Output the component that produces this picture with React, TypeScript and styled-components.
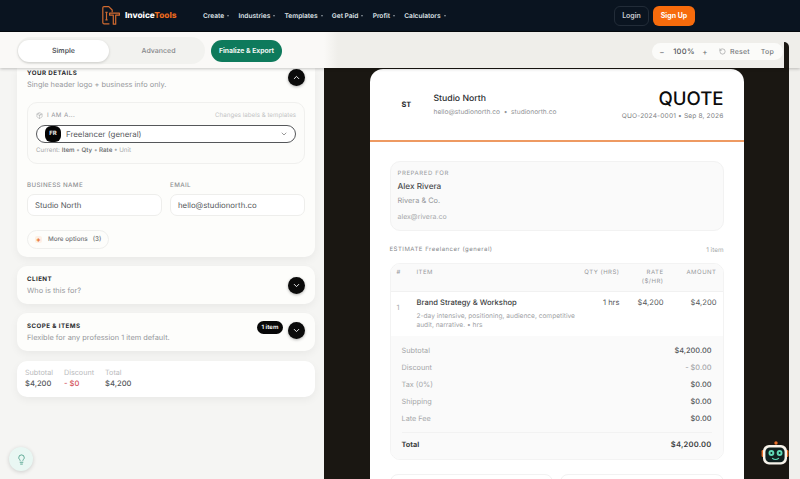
import styled, { createGlobalStyle } from 'styled-components'
import { ChevronDown, ChevronUp, Lightbulb, Package, RotateCcw } from 'lucide-react'

const navItems = ['Create', 'Industries', 'Templates', 'Get Paid', 'Profit', 'Calculators']
const summary = [
  { label: 'Subtotal', value: '$4,200.00', tone: '#55585c' },
  { label: 'Discount', value: '- $0.00', tone: '#a5a7aa' },
  { label: 'Tax (0%)', value: '$0.00', tone: '#55585c' },
  { label: 'Shipping', value: '$0.00', tone: '#55585c' },
  { label: 'Late Fee', value: '$0.00', tone: '#55585c' },
]

const App = () => {
  return (
    <Page>
      <GlobalStyle />
      <Header>
        <LogoMark viewBox="0 0 18 19" fill="none" stroke="#cf6a30" strokeWidth="1.2" strokeLinejoin="round">
          <path d="M7.4 17.8H2a1.2 1.2 0 0 1-1.2-1.2V1.8A1.2 1.2 0 0 1 2 .6h4.8l3.4 3.4v2.2" />
          <path d="M3.4 6.4h2.2M4.5 6.4v7.4M3.4 13.8h2.2" />
          <path d="M7.6 7.2h9.8v2h-3.7v9h-2.4v-9H7.6z" />
        </LogoMark>
        <Brand>
          Invoice<span>Tools</span>
        </Brand>
        <Nav>
          {navItems.map((item) => (
            <NavItem key={item}>
              {item}
              <Caret />
            </NavItem>
          ))}
        </Nav>
        <Login>Login</Login>
        <SignUp>Sign Up</SignUp>
      </Header>

      <Toolbar>
        <ToolbarLeft>
          <Toggle>
            <ToggleOption active>Simple</ToggleOption>
            <ToggleOption>Advanced</ToggleOption>
          </Toggle>
          <Finalize>Finalize &amp; Export</Finalize>
        </ToolbarLeft>
        <ToolbarRight>
          <ZoomPill>
            <ZoomSign>−</ZoomSign>
            <ZoomValue>100%</ZoomValue>
            <ZoomSign>+</ZoomSign>
            <ZoomAction>
              <RotateCcw size={7} strokeWidth={1.6} />
              Reset
            </ZoomAction>
            <ZoomAction>Top</ZoomAction>
          </ZoomPill>
          <PreviewCorner />
        </ToolbarRight>
      </Toolbar>

      <Workspace>
        <Sidebar>
          <DetailsCard>
            <CardHead>
              <div>
                <CardTitle>YOUR DETAILS</CardTitle>
                <CardSub>Single header logo + business info only.</CardSub>
              </div>
              <RoundButton>
                <ChevronUp size={9} strokeWidth={2.6} />
              </RoundButton>
            </CardHead>

            <RoleBox>
              <RoleTop>
                <RoleLabel>
                  <Package size={7} strokeWidth={1.5} />I AM A...
                </RoleLabel>
                <RoleHint>Changes labels &amp; templates</RoleHint>
              </RoleTop>
              <RoleSelect>
                <RoleBadge>FR</RoleBadge>
                <RoleName>Freelancer (general)</RoleName>
                <ChevronDown size={8} color="#666" />
              </RoleSelect>
              <RoleCurrent>
                Current: <b>Item</b> • <b>Qty</b> • <b>Rate</b> • Unit
              </RoleCurrent>
            </RoleBox>

            <FieldGrid>
              <Field>
                <FieldLabel>BUSINESS NAME</FieldLabel>
                <FieldInput>Studio North</FieldInput>
              </Field>
              <Field>
                <FieldLabel>EMAIL</FieldLabel>
                <FieldInput>hello@studionorth.co</FieldInput>
              </Field>
            </FieldGrid>

            <MoreOptions>
              <MoreDot>+</MoreDot>
              More options <MoreCount>(3)</MoreCount>
            </MoreOptions>
          </DetailsCard>

          <CollapsedCard>
            <div>
              <CardTitle>CLIENT</CardTitle>
              <CardSub>Who is this for?</CardSub>
            </div>
            <RoundButton>
              <ChevronDown size={9} strokeWidth={2.6} />
            </RoundButton>
          </CollapsedCard>

          <CollapsedCard>
            <div>
              <CardTitle>SCOPE &amp; ITEMS</CardTitle>
              <CardSub>Flexible for any profession 1 item default.</CardSub>
            </div>
            <ScopeActions>
              <CountPill>1 item</CountPill>
              <RoundButton>
                <ChevronDown size={9} strokeWidth={2.6} />
              </RoundButton>
            </ScopeActions>
          </CollapsedCard>

          <TotalsCard>
            <TotalCell>
              <TotalLabel>Subtotal</TotalLabel>
              <TotalValue>$4,200</TotalValue>
            </TotalCell>
            <TotalCell>
              <TotalLabel>Discount</TotalLabel>
              <TotalValue negative>- $0</TotalValue>
            </TotalCell>
            <TotalCell>
              <TotalLabel>Total</TotalLabel>
              <TotalValue>$4,200</TotalValue>
            </TotalCell>
          </TotalsCard>
        </Sidebar>

        <Preview>
          <Sheet>
            <SheetHeader>
              <Initials>ST</Initials>
              <Company>
                <CompanyName>Studio North</CompanyName>
                <CompanyMeta>hello@studionorth.co &nbsp;•&nbsp; studionorth.co</CompanyMeta>
              </Company>
              <DocInfo>
                <DocTitle>QUOTE</DocTitle>
                <DocMeta>QUO-2024-0001 • Sep 8, 2026</DocMeta>
              </DocInfo>
            </SheetHeader>

            <SheetBody>
              <Prepared>
                <PreparedLabel>PREPARED FOR</PreparedLabel>
                <PreparedName>Alex Rivera</PreparedName>
                <PreparedCompany>Rivera &amp; Co.</PreparedCompany>
                <PreparedEmail>alex@rivera.co</PreparedEmail>
              </Prepared>

              <EstimateRow>
                <EstimateTitle>ESTIMATE Freelancer (general)</EstimateTitle>
                <EstimateCount>1 item</EstimateCount>
              </EstimateRow>

              <ItemsTable>
                <TableHead>
                  <span>#</span>
                  <span>ITEM</span>
                  <HeadRight>QTY (HRS)</HeadRight>
                  <HeadRight>
                    RATE
                    <br />
                    ($/HR)
                  </HeadRight>
                  <HeadRight>AMOUNT</HeadRight>
                </TableHead>
                <TableRow>
                  <RowIndex>1</RowIndex>
                  <div>
                    <ItemName>Brand Strategy &amp; Workshop</ItemName>
                    <ItemDesc>2-day intensive, positioning, audience, competitive audit, narrative. • hrs</ItemDesc>
                  </div>
                  <RowNumber>1 hrs</RowNumber>
                  <RowNumber>$4,200</RowNumber>
                  <RowNumber>$4,200</RowNumber>
                </TableRow>
                <Summary>
                  {summary.map((row) => (
                    <SummaryRow key={row.label}>
                      <SummaryLabel>{row.label}</SummaryLabel>
                      <SummaryValue tone={row.tone}>{row.value}</SummaryValue>
                    </SummaryRow>
                  ))}
                  <GrandTotal>
                    <b>Total</b>
                    <GrandValue>$4,200.00</GrandValue>
                  </GrandTotal>
                </Summary>
              </ItemsTable>

              <BottomCards>
                <BottomCard />
                <BottomCard />
              </BottomCards>
            </SheetBody>
          </Sheet>
        </Preview>
        <RightEdge />
      </Workspace>

      <TipButton>
        <Lightbulb size={11} color="#2f8f75" strokeWidth={1.6} />
      </TipButton>

      <Robot viewBox="0 0 28 26">
        <circle cx="15" cy="2" r="1.7" fill="#e8702a" />
        <rect x="0.6" y="9" width="2.4" height="7" rx="1.2" fill="#e8702a" />
        <rect x="25" y="9" width="2.4" height="7" rx="1.2" fill="#e8702a" />
        <rect x="2" y="4" width="24" height="19.6" rx="6" fill="#f7f3ea" />
        <rect x="4.4" y="6.4" width="19.2" height="14.8" rx="4.5" fill="#10201f" />
        <circle cx="10.4" cy="12" r="2.9" fill="#5fd9b5" />
        <circle cx="18.6" cy="12" r="2.9" fill="#5fd9b5" />
        <circle cx="10.4" cy="12" r="1" fill="#10201f" />
        <circle cx="18.6" cy="12" r="1" fill="#10201f" />
        <path d="M11.5 17.4c1.6 1.4 4.4 1.4 6 0" fill="none" stroke="#5fd9b5" strokeWidth="1.2" strokeLinecap="round" />
      </Robot>
    </Page>
  )
}

export default App

const GlobalStyle = createGlobalStyle`
  html, body {
    margin: 0;
    height: 100%;
    overflow: hidden;
  }
  body {
    font-family: Inter, "Liberation Sans", sans-serif;
    text-rendering: geometricPrecision;
    background: #f5f5f3;
  }
  * {
    box-sizing: border-box;
  }
`
const Page = styled.div`
  position: relative;
  width: 800px;
  height: 479px;
  overflow: hidden;
  display: flex;
  flex-direction: column;
`
const Header = styled.header`
  height: 32px;
  flex: none;
  display: flex;
  align-items: center;
  padding-left: 102px;
  background: #0a1420;
  border-bottom: 1px solid #05090e;
`
const LogoMark = styled.svg`
  width: 18px;
  height: 19px;
  flex: none;
`
const Brand = styled.div`
  margin-left: 5px;
  font-size: 8.3px;
  font-weight: 800;
  color: #fff;
  width: 78px;
  span {
    color: #ea6a1e;
  }
`
const Nav = styled.nav`
  display: flex;
  width: 411px;
  gap: 9.2px;
`
const NavItem = styled.div`
  display: flex;
  align-items: center;
  gap: 3px;
  font-size: 6.6px;
  font-weight: 600;
  color: #dfe3e8;
`
const Caret = styled.i`
  width: 0;
  height: 0;
  border-left: 1.4px solid transparent;
  border-right: 1.4px solid transparent;
  border-top: 2px solid #8b929b;
`
const Login = styled.button`
  width: 35px;
  height: 20px;
  padding: 0;
  border: 1px solid #222c38;
  border-radius: 6px;
  background: transparent;
  color: #c8ccd1;
  font: 600 7px Inter, sans-serif;
`
const SignUp = styled.button`
  width: 42px;
  height: 20px;
  margin-left: 4px;
  padding: 0;
  border: none;
  border-radius: 6px;
  background: #f76b0c;
  color: #fff;
  font: 700 7px Inter, sans-serif;
`
const Toolbar = styled.div`
  position: relative;
  z-index: 2;
  height: 36px;
  flex: none;
  display: flex;
  background: #faf9f7;
  box-shadow: 0 1px 3px rgba(0, 0, 0, 0.22);
`
const ToolbarLeft = styled.div`
  width: 324px;
  display: flex;
  align-items: center;
  gap: 6px;
  padding: 1px 0 0 17px;
`
const ToolbarRight = styled.div`
  position: relative;
  flex: 1;
  display: flex;
  justify-content: flex-end;
  align-items: center;
  padding: 3px 17px 0 0;
  background: linear-gradient(90deg, #faf9f7, #efeeea 14px);
`
const PreviewCorner = styled.div`
  position: absolute;
  right: 11px;
  bottom: 0;
  width: 5px;
  height: 26px;
  border-radius: 0 5px 0 0;
  background: #1a1712;
`
const Toggle = styled.div`
  width: 188px;
  height: 27px;
  display: flex;
  align-items: center;
  padding: 0 1px;
  border-radius: 14px;
  background: #f2f2ef;
`
const ToggleOption = styled.div<{ active?: boolean }>`
  width: ${({ active }) => (active ? '91px' : '99px')};
  height: 22px;
  flex: none;
  display: flex;
  align-items: center;
  justify-content: center;
  border-radius: 11px;
  font-size: 7px;
  font-weight: ${({ active }) => (active ? 600 : 500)};
  color: ${({ active }) => (active ? '#55585c' : '#85878a')};
  background: ${({ active }) => (active ? '#fff' : 'transparent')};
  box-shadow: ${({ active }) => (active ? '0 1px 3px rgba(0,0,0,0.16)' : 'none')};
`
const Finalize = styled.button`
  width: 71px;
  height: 22px;
  padding: 0;
  border: none;
  border-radius: 11px;
  background: #0e7a5c;
  color: #f1f7f4;
  font: 700 6.8px Inter, sans-serif;
`
const ZoomPill = styled.div`
  width: 131px;
  height: 17px;
  display: flex;
  align-items: center;
  padding-left: 7px;
  border-radius: 9px;
  background: #fbfbf9;
  color: #6b6d70;
`
const ZoomSign = styled.span`
  width: 6px;
  font-size: 8px;
  text-align: center;
`
const ZoomValue = styled.span`
  width: 32px;
  margin: 0 2px 0 3px;
  font-size: 7.6px;
  font-weight: 500;
  text-align: center;
  letter-spacing: 0.3px;
  color: #55585c;
`
const ZoomAction = styled.span`
  display: flex;
  align-items: center;
  gap: 4px;
  margin-left: 11px;
  font-size: 7px;
  font-weight: 500;
  letter-spacing: 0.2px;
  color: #76787b;
`
const Workspace = styled.div`
  flex: 1;
  min-height: 0;
  display: grid;
  grid-template-columns: 324px 465px 11px;
`
const Sidebar = styled.aside`
  display: flex;
  flex-direction: column;
  gap: 9px;
  padding-left: 17px;
  padding-right: 9px;
  background: #f5f5f3;
`
const Card = styled.section`
  border-radius: 10px;
  background: #fdfdfb;
  box-shadow: 0 3px 8px rgba(0, 0, 0, 0.05);
`
const DetailsCard = styled(Card)`
  height: 189px;
  flex: none;
  padding: 1px 10px 0;
  border-radius: 0 0 10px 10px;
`
const CardHead = styled.div`
  display: flex;
  justify-content: space-between;
  align-items: flex-start;
`
const CardTitle = styled.div`
  padding-top: 1px;
  font-size: 6.2px;
  line-height: 8px;
  font-weight: 700;
  letter-spacing: 0.45px;
  color: #2a2c2f;
`
const CardSub = styled.div`
  margin-top: 2px;
  font-size: 7.4px;
  line-height: 9px;
  color: #96989b;
`
const RoundButton = styled.div`
  width: 17px;
  height: 17px;
  flex: none;
  display: flex;
  align-items: center;
  justify-content: center;
  border-radius: 50%;
  background: #0b0b0b;
  color: #f1f1f1;
  box-shadow: 0 1px 3px rgba(0, 0, 0, 0.3);
`
const RoleBox = styled.div`
  height: 62px;
  margin-top: 12.5px;
  padding: 9px 8px 0;
  border: 1px solid #f0f0ee;
  border-radius: 10px;
  background: #fcfcfa;
`
const RoleTop = styled.div`
  display: flex;
  justify-content: space-between;
  align-items: center;
`
const RoleLabel = styled.div`
  display: flex;
  align-items: center;
  gap: 4px;
  font-size: 6.2px;
  letter-spacing: 0.4px;
  color: #95979a;
`
const RoleHint = styled.div`
  font-size: 6.2px;
  color: #c3c4c5;
`
const RoleSelect = styled.div`
  height: 18px;
  margin-top: 6px;
  display: flex;
  align-items: center;
  padding: 0 7px 0 8px;
  border: 1px solid #55575a;
  border-radius: 9px;
  background: #fff;
`
const RoleBadge = styled.div`
  width: 16px;
  height: 16px;
  display: flex;
  align-items: center;
  justify-content: center;
  border-radius: 6px;
  background: #050505;
  color: #eee;
  font-size: 6px;
  font-weight: 700;
`
const RoleName = styled.div`
  flex: 1;
  margin-left: 5px;
  font-size: 7.9px;
  color: #55585c;
`
const RoleCurrent = styled.div`
  margin-top: 4px;
  font-size: 6.2px;
  color: #a5a7a9;
  b {
    font-weight: 500;
    color: #636568;
  }
`
const FieldGrid = styled.div`
  margin-top: 18px;
  display: grid;
  grid-template-columns: 135px 135px;
  gap: 8px;
`
const Field = styled.div`
  display: flex;
  flex-direction: column;
  gap: 4px;
`
const FieldLabel = styled.div`
  font-size: 6.2px;
  line-height: 8px;
  font-weight: 500;
  letter-spacing: 0.4px;
  color: #8d8f92;
`
const FieldInput = styled.div`
  height: 22px;
  display: flex;
  align-items: center;
  padding-left: 7px;
  border: 1px solid #eeeeec;
  border-radius: 7px;
  background: #fff;
  font-size: 7.8px;
  color: #55585c;
`
const MoreOptions = styled.div`
  width: 82px;
  height: 19px;
  margin-top: 14px;
  display: flex;
  align-items: center;
  gap: 3px;
  padding-left: 7px;
  border: 1px solid #efefed;
  border-radius: 10px;
  font-size: 6.3px;
  font-weight: 500;
  color: #707275;
`
const MoreDot = styled.span`
  width: 7px;
  height: 7px;
  margin-right: 3px;
  display: flex;
  align-items: center;
  justify-content: center;
  border-radius: 2px;
  background: #fdf0e6;
  color: #e8702a;
  font-size: 7px;
  font-weight: 700;
`
const MoreCount = styled.span`
  margin-left: 2px;
`
const CollapsedCard = styled(Card)`
  height: 38px;
  flex: none;
  display: flex;
  justify-content: space-between;
  align-items: center;
  padding: 0 10px;
`
const ScopeActions = styled.div`
  display: flex;
  align-items: center;
  gap: 5px;
  padding-bottom: 3px;
`
const CountPill = styled.div`
  width: 26px;
  height: 13px;
  margin-top: -6px;
  display: flex;
  align-items: center;
  justify-content: center;
  border-radius: 7px;
  background: #070707;
  color: #eee;
  font-size: 6px;
  font-weight: 700;
`
const TotalsCard = styled(Card)`
  height: 36px;
  flex: none;
  margin-top: 1px;
  display: flex;
  gap: 11px;
  padding: 7px 8px 0;
  background: #fff;
`
const TotalCell = styled.div`
  display: flex;
  flex-direction: column;
  gap: 2px;
`
const TotalLabel = styled.div`
  font-size: 7.2px;
  line-height: 9px;
  color: #b9babc;
`
const TotalValue = styled.div<{ negative?: boolean }>`
  font-size: 7.6px;
  line-height: 10px;
  font-weight: 500;
  color: ${({ negative }) => (negative ? '#d4545c' : '#55585c')};
`
const Preview = styled.main`
  min-height: 0;
  overflow: hidden;
  display: flex;
  justify-content: center;
  padding-top: 1px;
  background: #1a1712;
`
const RightEdge = styled.div`
  background: #f0efec;
`
const Sheet = styled.article`
  width: 374px;
  height: 480px;
  flex: none;
  border-radius: 13px 13px 0 0;
  background: #fff;
`
const SheetHeader = styled.div`
  height: 73px;
  display: flex;
  align-items: flex-start;
  padding: 18px 20px 0 32px;
  border-bottom: 2px solid #ee9a62;
`
const Initials = styled.div`
  width: 32px;
  margin-top: 13px;
  font-size: 7.4px;
  font-weight: 700;
  color: #26282b;
`
const Company = styled.div`
  flex: 1;
  padding-top: 7px;
`
const CompanyName = styled.div`
  font-size: 8.7px;
  line-height: 11px;
  font-weight: 500;
  color: #2a2c2f;
`
const CompanyMeta = styled.div`
  margin-top: 3px;
  font-size: 6.6px;
  line-height: 9px;
  color: #929497;
`
const DocInfo = styled.div`
  text-align: right;
`
const DocTitle = styled.div`
  font-size: 18.6px;
  line-height: 24px;
  font-weight: 500;
  color: #0c0c0c;
`
const DocMeta = styled.div`
  margin-top: 1px;
  font-size: 6.6px;
  line-height: 9px;
  letter-spacing: 0.15px;
  color: #818386;
`
const SheetBody = styled.div`
  padding: 19px 20px 0;
`
const Prepared = styled.div`
  height: 70px;
  padding: 8px 7px 0;
  border: 1px solid #f2f2f2;
  border-radius: 10px;
  background: #fafafa;
`
const PreparedLabel = styled.div`
  font-size: 6px;
  line-height: 8px;
  font-weight: 400;
  letter-spacing: 0.6px;
  color: #96989b;
`
const PreparedName = styled.div`
  margin-top: 3px;
  font-size: 8.2px;
  line-height: 10px;
  font-weight: 500;
  color: #4a4c4f;
`
const PreparedCompany = styled.div`
  margin-top: 5px;
  font-size: 7.4px;
  line-height: 9px;
  color: #96989b;
`
const PreparedEmail = styled.div`
  margin-top: 7px;
  font-size: 7px;
  line-height: 9px;
  color: #a5a7a9;
`
const EstimateRow = styled.div`
  height: 32px;
  display: flex;
  justify-content: space-between;
  align-items: center;
  padding-top: 5px;
`
const EstimateTitle = styled.div`
  font-size: 6px;
  font-weight: 400;
  letter-spacing: 0.5px;
  color: #85878a;
`
const EstimateCount = styled.div`
  font-size: 6.4px;
  color: #a5a7a9;
`
const ItemsTable = styled.div`
  border: 1px solid #f3f3f3;
  border-radius: 10px;
  overflow: hidden;
`
const tableColumns = '20px 165px 38px 44px 53px'
const TableHead = styled.div`
  height: 28px;
  display: grid;
  grid-template-columns: ${tableColumns};
  padding: 4px 6px 0;
  background: #fafafa;
  border-bottom: 1px solid #f1f1f1;
  font-size: 6px;
  line-height: 9px;
  font-weight: 400;
  letter-spacing: 0.5px;
  color: #95979a;
  white-space: nowrap;
`
const HeadRight = styled.span`
  text-align: right;
`
const TableRow = styled.div`
  height: 44px;
  display: grid;
  grid-template-columns: ${tableColumns};
  padding: 6px 6px 0;
`
const RowIndex = styled.span`
  padding-top: 5px;
  font-size: 7.4px;
  color: #a5a7a9;
`
const ItemName = styled.div`
  font-size: 7.6px;
  line-height: 10px;
  font-weight: 500;
  color: #3c3e41;
`
const ItemDesc = styled.div`
  width: 165px;
  margin-top: 4px;
  font-size: 6.6px;
  line-height: 9px;
  color: #a1a3a6;
`
const RowNumber = styled.span`
  text-align: right;
  font-size: 7.6px;
  line-height: 10px;
  color: #55585c;
`
const Summary = styled.div`
  height: 123px;
  padding: 6px 11px 0 11px;
  background: #fafafa;
`
const SummaryRow = styled.div`
  height: 16.9px;
  display: flex;
  justify-content: space-between;
  align-items: center;
`
const SummaryLabel = styled.span`
  font-size: 7.3px;
  color: #a5a7a9;
`
const SummaryValue = styled.span<{ tone: string }>`
  font-size: 7.4px;
  font-weight: 500;
  color: ${({ tone }) => tone};
`
const GrandTotal = styled.div`
  height: 24px;
  margin-top: 5.5px;
  display: flex;
  justify-content: space-between;
  align-items: center;
  border-top: 1px solid #f2f2f2;
  font-size: 7.3px;
  color: #3c3e41;
  b {
    font-weight: 700;
  }
`
const GrandValue = styled.span`
  font-size: 7.6px;
  font-weight: 600;
  letter-spacing: 0.2px;
`
const BottomCards = styled.div`
  margin-top: 14px;
  display: grid;
  grid-template-columns: 1fr 1fr;
  gap: 7px;
`
const BottomCard = styled.div`
  height: 40px;
  border: 1px solid #f2f2f2;
  border-radius: 8px;
`
const TipButton = styled.div`
  position: absolute;
  left: 9px;
  bottom: 8px;
  width: 24px;
  height: 24px;
  display: flex;
  align-items: center;
  justify-content: center;
  border-radius: 50%;
  background: #e9f7f3;
  box-shadow: 0 1px 4px rgba(0, 0, 0, 0.16);
`
const Robot = styled.svg`
  position: absolute;
  left: 761px;
  top: 441px;
  width: 28px;
  height: 26px;
`
